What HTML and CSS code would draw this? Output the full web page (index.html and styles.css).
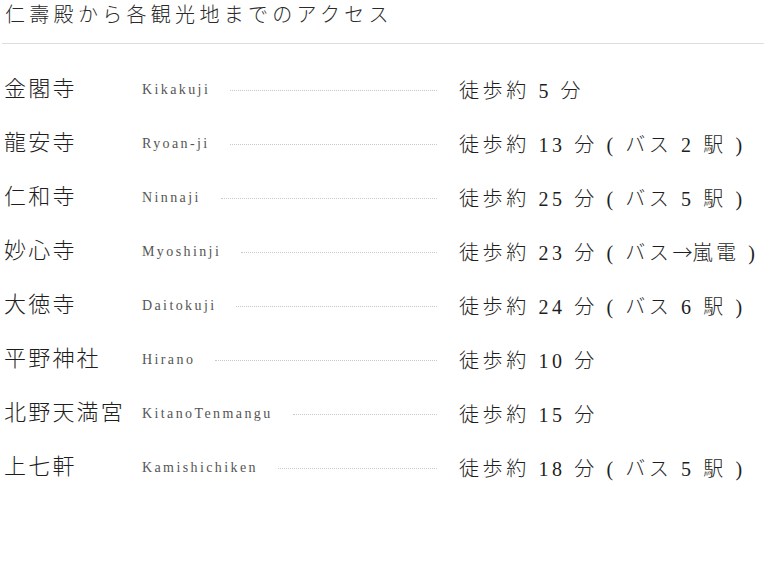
FILE: index.html
```html
<!DOCTYPE html>
<html lang="ja">
<head>
<meta charset="utf-8">
<link rel="stylesheet" href="styles.css">
</head>
<body>
<div class="page">
  <h1 class="title">仁壽殿から各観光地までのアクセス</h1>
  <ul class="list">
    <li class="row"><span class="name">金閣寺</span><span class="roma">Kikakuji</span><span class="dots"></span><span class="time">徒歩約 5 分</span></li>
    <li class="row"><span class="name">龍安寺</span><span class="roma">Ryoan-ji</span><span class="dots"></span><span class="time">徒歩約 13 分 ( バス 2 駅 )</span></li>
    <li class="row"><span class="name">仁和寺</span><span class="roma">Ninnaji</span><span class="dots"></span><span class="time">徒歩約 25 分 ( バス 5 駅 )</span></li>
    <li class="row"><span class="name">妙心寺</span><span class="roma">Myoshinji</span><span class="dots"></span><span class="time">徒歩約 23 分 ( バス<span class="arrow">→</span>嵐電 )</span></li>
    <li class="row"><span class="name">大徳寺</span><span class="roma">Daitokuji</span><span class="dots"></span><span class="time">徒歩約 24 分 ( バス 6 駅 )</span></li>
    <li class="row"><span class="name">平野神社</span><span class="roma">Hirano</span><span class="dots"></span><span class="time">徒歩約 10 分</span></li>
    <li class="row"><span class="name">北野天満宮</span><span class="roma">KitanoTenmangu</span><span class="dots"></span><span class="time">徒歩約 15 分</span></li>
    <li class="row"><span class="name">上七軒</span><span class="roma">Kamishichiken</span><span class="dots"></span><span class="time">徒歩約 18 分 ( バス 5 駅 )</span></li>
  </ul>
</div>
</body>
</html>
```
FILE: styles.css
```css
html, body {
  margin: 0;
  padding: 0;
  background: #fff;
}
body {
  font-family: "Liberation Serif", "Noto Sans CJK JP", serif;
  color: #222;
}
.page {
  width: 762px;
  padding: 0 2px;
}
.title {
  margin: 0;
  padding: 0 0 13px 3px;
  font-size: 20px;
  font-weight: 300;
  letter-spacing: 4.3px;
  line-height: 30px;
  color: #2a2a2a;
  border-bottom: 1px solid #dddddd;
}
.list {
  list-style: none;
  margin: 0;
  padding: 18px 0 0 0;
}
.row {
  display: flex;
  align-items: center;
  height: 54px;
}
.name {
  width: 140px;
  flex: none;
  padding-left: 2px;
  box-sizing: border-box;
  font-size: 22px;
  line-height: 30px;
  letter-spacing: 2.2px;
  font-weight: 300;
  white-space: nowrap;
  color: #1e1e1e;
}
.roma {
  flex: none;
  font-size: 14px;
  letter-spacing: 2.4px;
  color: #555;
  margin-right: 20px;
  margin-top: 1px;
}
.dots {
  flex: 1;
  border-top: 1px dotted #c8c8c8;
  height: 0;
  margin-top: 2px;
}
.time {
  flex: none;
  width: 305px;
  padding-left: 22px;
  font-size: 20px;
  letter-spacing: 3.6px;
  font-weight: 300;
  white-space: nowrap;
  color: #1e1e1e;
}
.arrow {
  font-family: "Noto Sans CJK JP", sans-serif;
  letter-spacing: 0;
}
```
